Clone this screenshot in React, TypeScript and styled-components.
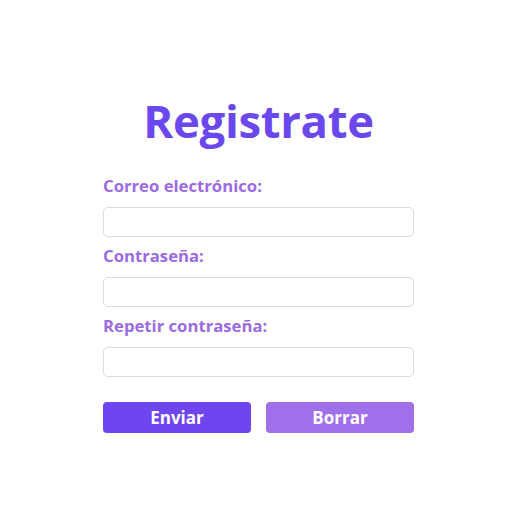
import React from "react";
import styled, { createGlobalStyle } from "styled-components";

const Global = createGlobalStyle`
  html, body { margin: 0; padding: 0; background: #ffffff; }
  body { font-family: "Open Sans", "Noto Sans", sans-serif; }
`;

const Page = styled.div`
  box-sizing: border-box;
  width: 518px;
  height: 518px;
  padding: 88px 104px 0 103px;
  background: #fff;
`;

const Form = styled.form`
  display: flex;
  flex-direction: column;
`;

const Title = styled.h1`
  margin: 0 0 24px;
  text-align: center;
  font-family: "Open Sans", sans-serif;
  font-weight: 700;
  font-size: 45.5px;
  line-height: 64px;
  letter-spacing: -0.3px;
  color: #6b48ee;
`;

const Field = styled.div`
  display: flex;
  flex-direction: column;
  margin-bottom: 9px;
`;

const Label = styled.label`
  font-family: "Open Sans", sans-serif;
  font-weight: 700;
  font-size: 16.7px;
  line-height: 20px;
  color: #9b6be3;
  margin-bottom: 11px;
`;

const Input = styled.input`
  box-sizing: border-box;
  width: 100%;
  height: 30px;
  border: 1px solid #dcdcdc;
  border-radius: 5px;
  background: #fff;
  outline: none;
  padding: 0 8px;
`;

const Buttons = styled.div`
  display: flex;
  justify-content: space-between;
  margin-top: 16px;
`;

const Button = styled.button<{ $variant: "primary" | "secondary" }>`
  width: 148px;
  height: 31px;
  border: none;
  border-radius: 4px;
  background: ${(p) => (p.$variant === "primary" ? "#6d46ef" : "#a070ea")};
  color: #fff;
  font-family: "Open Sans", sans-serif;
  font-weight: 700;
  font-size: 17px;
  padding: 0;
  cursor: pointer;
`;

export default function App() {
  return (
    <Page>
      <Global />
      <Form onSubmit={(e) => e.preventDefault()}>
        <Title>Registrate</Title>
        <Field>
          <Label>Correo electrónico:</Label>
          <Input type="email" />
        </Field>
        <Field>
          <Label>Contraseña:</Label>
          <Input type="password" />
        </Field>
        <Field>
          <Label>Repetir contraseña:</Label>
          <Input type="password" />
        </Field>
        <Buttons>
          <Button $variant="primary" type="submit">Enviar</Button>
          <Button $variant="secondary" type="reset">Borrar</Button>
        </Buttons>
      </Form>
    </Page>
  );
}
